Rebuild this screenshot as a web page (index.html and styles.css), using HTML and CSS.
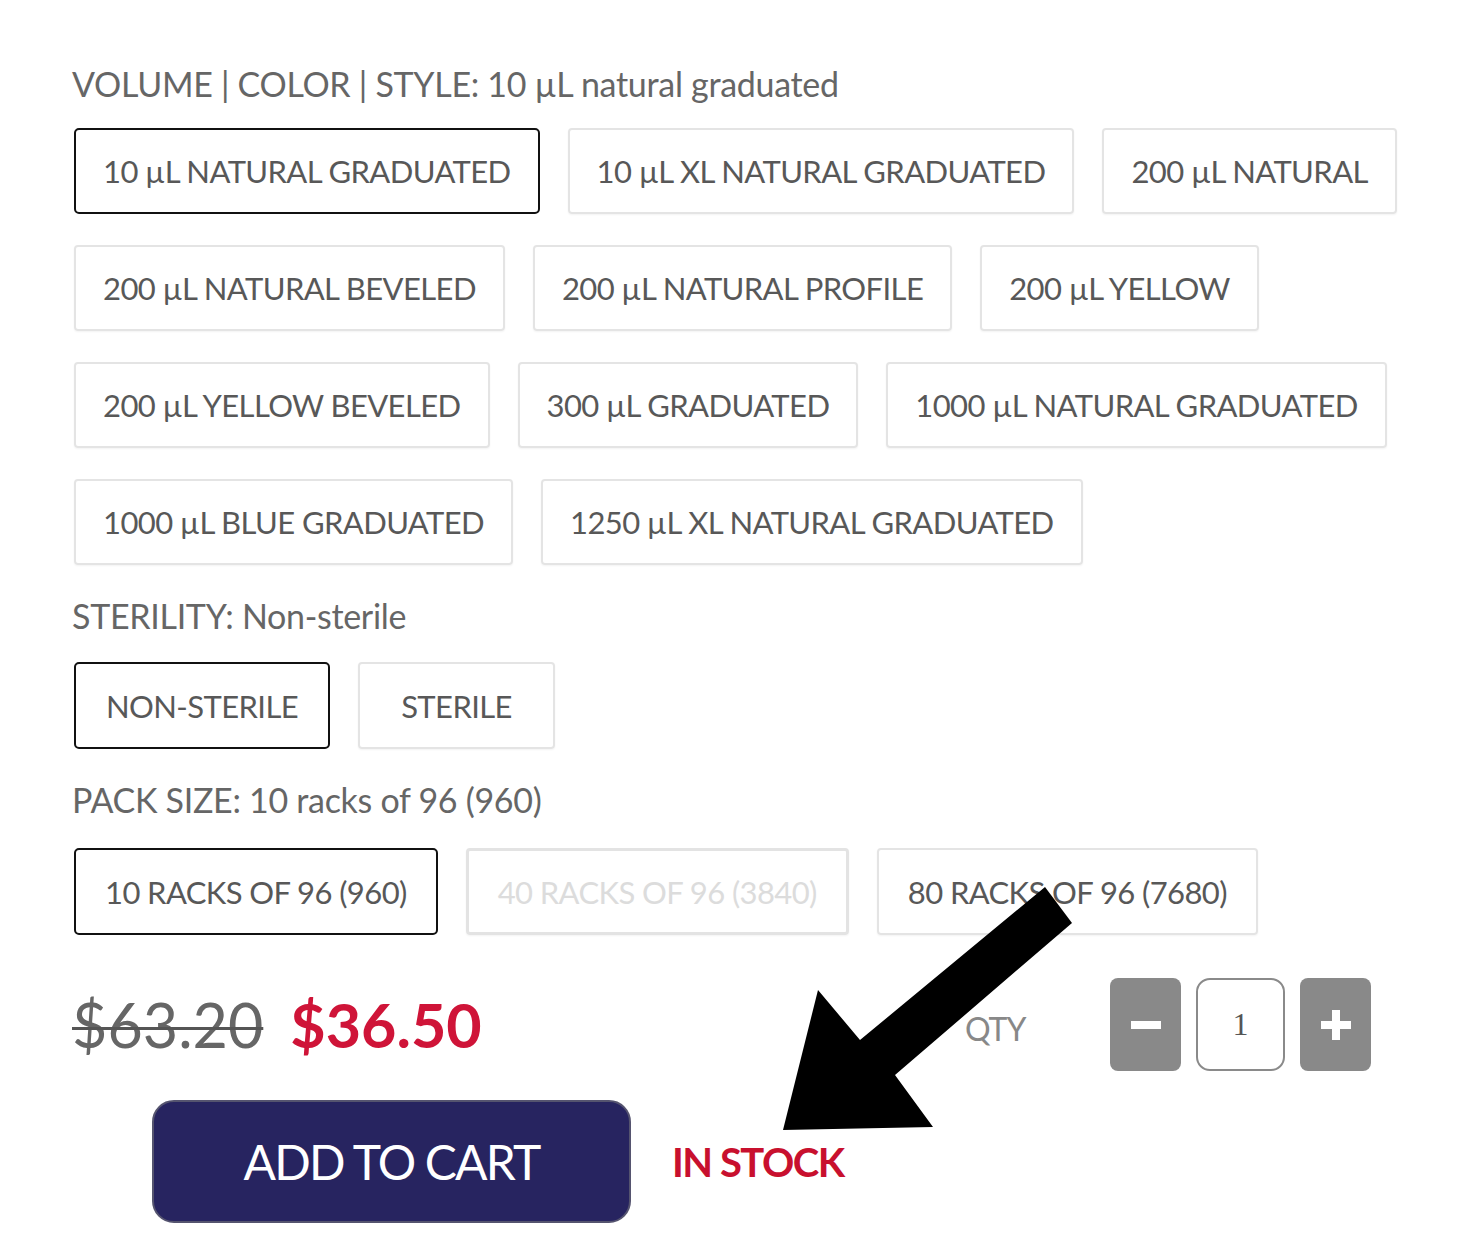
FILE: index.html
```html
<!DOCTYPE html>
<html lang="en">
<head>
<meta charset="utf-8">
<title>Product options</title>
<link rel="stylesheet" href="styles.css">
</head>
<body>
<div class="page">
  <div class="label">VOLUME | COLOR | STYLE: 10 µL natural graduated</div>
  <div class="options first">
    <div class="opt selected">10 µL NATURAL GRADUATED</div>
    <div class="opt">10 µL XL NATURAL GRADUATED</div>
    <div class="opt">200 µL NATURAL</div>
    <div class="opt">200 µL NATURAL BEVELED</div>
    <div class="opt">200 µL NATURAL PROFILE</div>
    <div class="opt">200 µL YELLOW</div>
    <div class="opt">200 µL YELLOW BEVELED</div>
    <div class="opt">300 µL GRADUATED</div>
    <div class="opt">1000 µL NATURAL GRADUATED</div>
    <div class="opt">1000 µL BLUE GRADUATED</div>
    <div class="opt">1250 µL XL NATURAL GRADUATED</div>
  </div>

  <div class="label label-sterility">STERILITY: Non-sterile</div>
  <div class="options second">
    <div class="opt selected">NON-STERILE</div>
    <div class="opt wide">STERILE</div>
  </div>

  <div class="label label-pack">PACK SIZE: 10 racks of 96 (960)</div>
  <div class="options third">
    <div class="opt selected">10 RACKS OF 96 (960)</div>
    <div class="opt disabled">40 RACKS OF 96 (3840)</div>
    <div class="opt">80 RACKS OF 96 (7680)</div>
  </div>

  <div class="price-row">
    <div class="prices">
      <span class="old">$63.20</span>
      <span class="new">$36.50</span>
    </div>
    <div class="qty-label">QTY</div>
    <div class="qty">
      <div class="qbtn">
        <svg width="30" height="30" viewBox="0 0 30 30"><rect x="0" y="11" width="30" height="8" fill="#fff"/></svg>
      </div>
      <div class="qinput">1</div>
      <div class="qbtn">
        <svg width="30" height="30" viewBox="0 0 30 30"><rect x="0" y="11" width="30" height="8" fill="#fff"/><rect x="11" y="0" width="8" height="30" fill="#fff"/></svg>
      </div>
    </div>
  </div>

  <div class="cart-row">
    <div class="cart">ADD TO CART</div>
    <span class="stock">IN STOCK</span>
  </div>

  <svg class="arrow" width="1459" height="1250" viewBox="0 0 1459 1250">
    <polygon points="1045,887 1072,923 895,1075 933,1127 783,1130 818,990 860,1040" fill="#000"/>
  </svg>
</div>
</body>
</html>
```
FILE: styles.css
```css
html, body {
  margin: 0;
  padding: 0;
  background: #fff;
}

body {
  font-family: Lato, "Open Sans", sans-serif;
  color: #555;
}

.page {
  position: relative;
  width: 1459px;
  height: 1250px;
  box-sizing: border-box;
  padding: 64px 0 0 74px;
  overflow: hidden;
}

.label {
  margin-left: -2px;
  font-size: 34px;
  line-height: 40px;
  letter-spacing: -0.3px;
  color: #666;
  white-space: nowrap;
}

.label-sterility {
  margin-top: 31px;
}

.label-pack {
  margin-top: 31px;
}

.options {
  display: flex;
  flex-wrap: wrap;
  gap: 31px 28px;
  width: 1360px;
}

.options.first {
  margin-top: 24px;
}

.options.second {
  margin-top: 26px;
}

.options.third {
  margin-top: 28px;
}

.opt {
  height: 86px;
  box-sizing: border-box;
  border: 2px solid #e4e4e4;
  border-radius: 4px;
  padding: 0 27px;
  display: flex;
  align-items: center;
  justify-content: center;
  font-size: 31px;
  letter-spacing: -0.6px;
  color: #585858;
  white-space: nowrap;
  box-shadow: 0 1px 2px rgba(0, 0, 0, 0.05);
}

.second .opt,
.third .opt {
  height: 87px;
}

.opt.wide {
  min-width: 197px;
}

.second .opt.selected {
  padding: 0 30px;
}

.third .opt {
  padding: 0 29px;
}

.opt.selected {
  border-color: #111;
  border-radius: 5px;
  box-shadow: none;
}

.opt.disabled {
  border: 3px solid #e3e3e3;
  color: #dcdcdc;
}

.price-row {
  margin-top: 43px;
  height: 93px;
  display: flex;
  align-items: center;
}

.prices {
  width: 893px;
  margin-left: -2px;
  display: flex;
  align-items: center;
  white-space: nowrap;
}

.old {
  font-size: 61px;
  color: #666;
  text-decoration: line-through;
  text-decoration-thickness: 3px;
  text-decoration-color: #555;
}

.new {
  margin-left: 27px;
  font-size: 61px;
  font-weight: 700;
  color: #cf1438;
}

.qty-label {
  width: 145px;
  padding-top: 8px;
  font-size: 32px;
  letter-spacing: -1px;
  color: #888;
}

.qty {
  display: flex;
  gap: 15px;
}

.qbtn {
  width: 71px;
  height: 93px;
  background: #898989;
  border-radius: 8px;
  display: flex;
  align-items: center;
  justify-content: center;
}

.qinput {
  width: 89px;
  height: 93px;
  box-sizing: border-box;
  border: 2px solid #8a8a8a;
  border-radius: 14px;
  display: flex;
  align-items: center;
  justify-content: center;
  font-family: "Liberation Serif", serif;
  font-size: 32px;
  color: #555;
}

.cart-row {
  margin-top: 29px;
  padding-left: 78px;
  display: flex;
  align-items: center;
}

.cart {
  width: 479px;
  height: 123px;
  box-sizing: border-box;
  background: #272460;
  border: 2px solid #55546f;
  border-radius: 22px;
  color: #fff;
  font-size: 48px;
  letter-spacing: -1.8px;
  display: flex;
  align-items: center;
  justify-content: center;
}

.stock {
  margin-left: 41px;
  font-size: 40px;
  font-weight: 700;
  letter-spacing: -1.5px;
  color: #c8102e;
}

.arrow {
  position: absolute;
  top: 0;
  left: 0;
  pointer-events: none;
}
```
